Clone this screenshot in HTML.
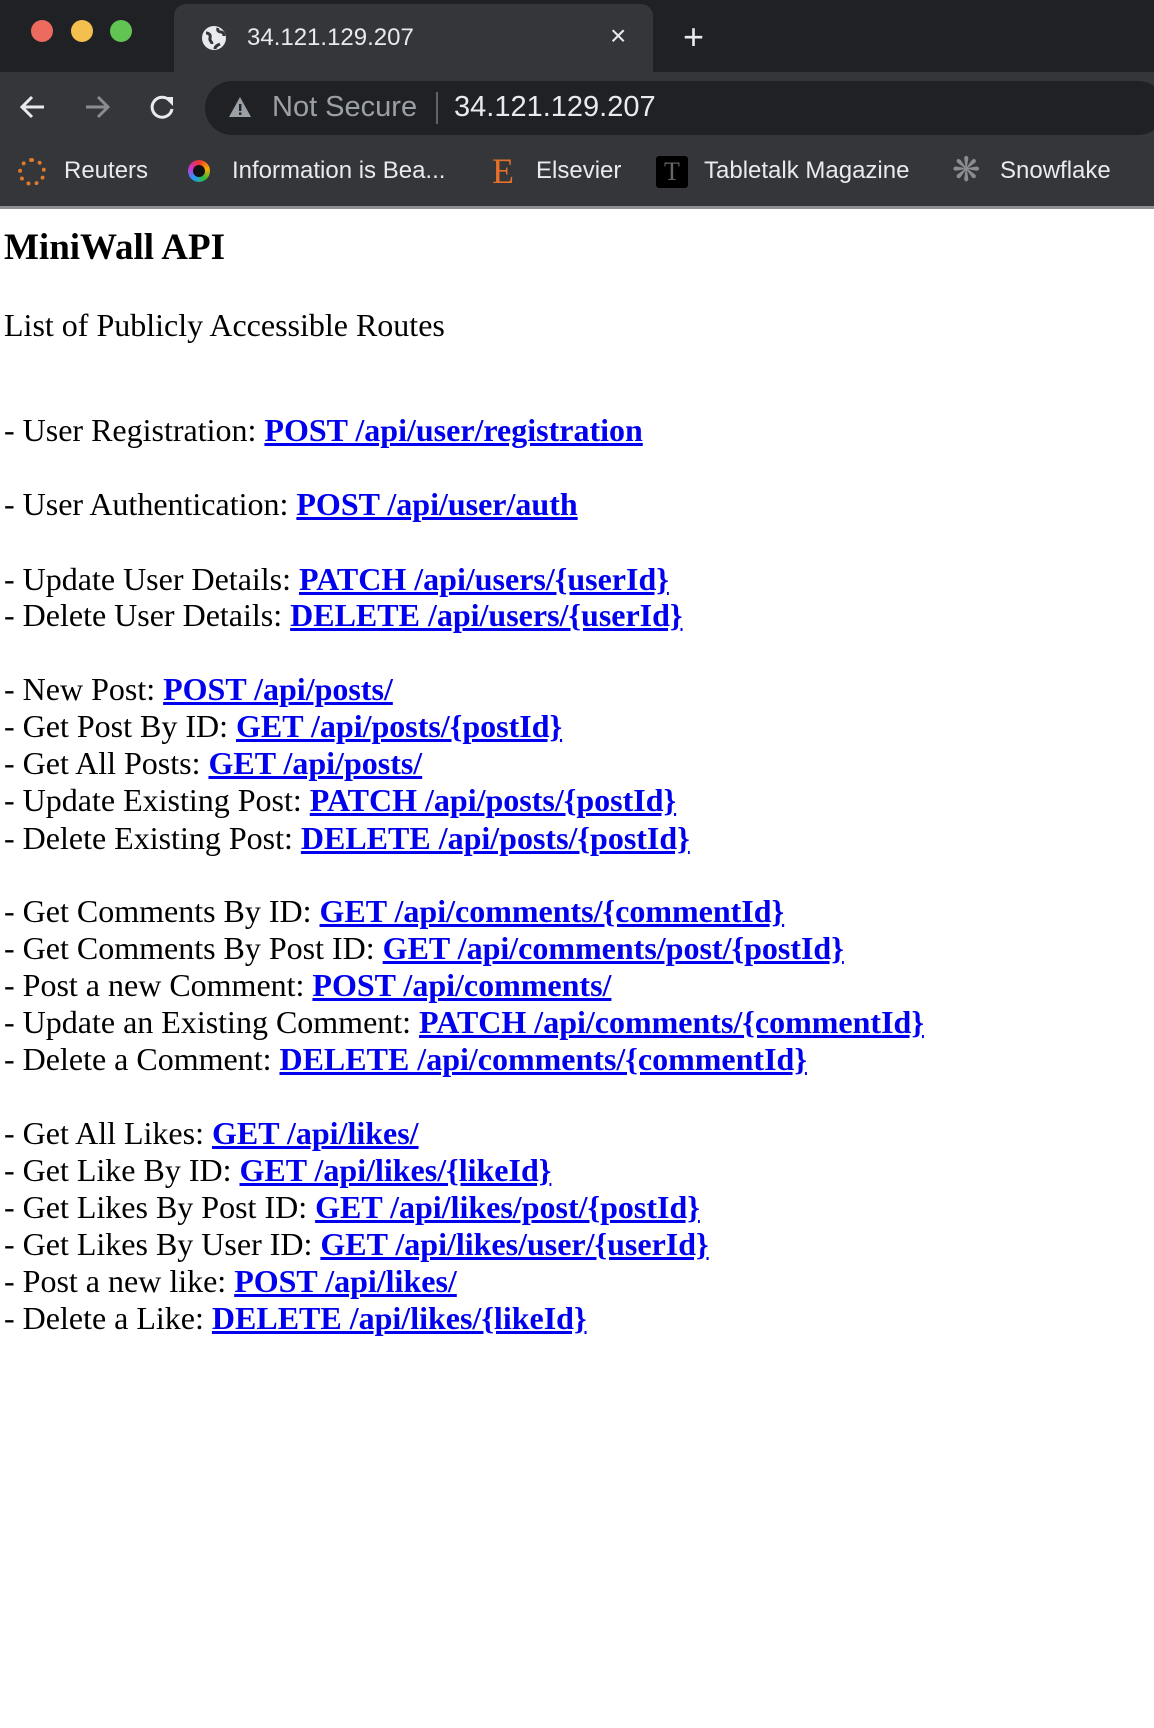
<!DOCTYPE html>
<html><head><meta charset="utf-8"><style>
*{margin:0;padding:0;box-sizing:border-box}
html,body{width:1154px;height:1728px;background:#fff;overflow:hidden;position:relative}
.ch{font-family:"Liberation Sans",sans-serif;color:#e8eaed;position:absolute}
.l{position:absolute;left:4px;font-family:"Liberation Serif",serif;font-size:32px;line-height:37px;white-space:nowrap;color:#000}
.l a{color:#0000ee;font-weight:bold;text-decoration:underline}
</style></head><body>
<div style="position:absolute;left:0;top:0;width:1154px;height:72px;background:#202124"></div>
<div style="position:absolute;left:31px;top:20px;width:22px;height:22px;border-radius:50%;background:#ec6a5e"></div>
<div style="position:absolute;left:71px;top:20px;width:22px;height:22px;border-radius:50%;background:#f4bf4f"></div>
<div style="position:absolute;left:110px;top:20px;width:22px;height:22px;border-radius:50%;background:#61c554"></div>
<div style="position:absolute;left:174px;top:4px;width:479px;height:70px;background:#35363a;border-radius:12px 12px 0 0"></div>
<svg style="position:absolute;left:201px;top:25px" width="26" height="26" viewBox="0 0 26 26"><circle cx="13" cy="13" r="12" fill="#e8eaed"/><path d="M5 8c3 0 5 2 4 5s2 3 2 6M17 3c-1 3 1 4 3 4s3 2 3 4M14 24c0-3 3-4 5-5" stroke="#35363a" stroke-width="3" fill="none"/></svg>
<div class="ch" style="left:247px;top:24px;font-size:24px">34.121.129.207</div>
<div class="ch" style="left:610px;top:20px;font-size:28px">×</div>
<div class="ch" style="left:683px;top:16px;font-size:36px">+</div>
<div style="position:absolute;left:0;top:72px;width:1154px;height:137px;background:#35363a"></div>
<svg style="position:absolute;left:18px;top:93px" width="190" height="28" viewBox="0 0 190 28"><path d="M26 14H4M14 4L4 14l10 10" stroke="#e8eaed" stroke-width="3" fill="none"/><path d="M68 14h22M80 4l10 10-10 10" stroke="#8a8c90" stroke-width="3" fill="none"/><path d="M152 8a10 10 0 1 0 2 8" stroke="#e8eaed" stroke-width="3" fill="none"/><path d="M146 4h9v9z" fill="#e8eaed"/></svg>
<div style="position:absolute;left:205px;top:81px;width:960px;height:54px;background:#202124;border-radius:27px"></div>
<svg style="position:absolute;left:228px;top:96px" width="24" height="22" viewBox="0 0 24 22"><path d="M12 1L23 21H1z" fill="#9aa0a6"/><rect x="11" y="8" width="2.4" height="7" fill="#202124"/><rect x="11" y="16.5" width="2.4" height="2.4" fill="#202124"/></svg>
<div class="ch" style="left:272px;top:91px;font-size:29px;color:#9aa0a6">Not Secure</div>
<div style="position:absolute;left:436px;top:92px;width:2px;height:32px;background:#5f6368"></div>
<div class="ch" style="left:454px;top:91px;font-size:29px">34.121.129.207</div>
<div style="position:absolute;left:18px;top:158px;width:28px;height:28px;border-radius:50%;border:4px dotted #e07a2a"></div>
<div class="ch" style="left:64px;top:157px;font-size:24px">Reuters</div>
<div style="position:absolute;left:188px;top:160px;width:22px;height:22px;border-radius:50%;background:conic-gradient(#e33,#fa0,#3b3,#29f,#c3c,#e33)"></div>
<div style="position:absolute;left:193px;top:165px;width:12px;height:12px;border-radius:50%;background:#111"></div>
<div class="ch" style="left:232px;top:157px;font-size:24px">Information is Bea...</div>
<div class="ch" style="left:492px;top:150px;font-size:36px;color:#e4702a;font-family:'Liberation Serif',serif">E</div>
<div class="ch" style="left:536px;top:157px;font-size:24px">Elsevier</div>
<div style="position:absolute;left:656px;top:156px;width:32px;height:32px;background:#000;border-radius:3px;color:#666;font:26px 'Liberation Serif',serif;text-align:center;line-height:32px">T</div>
<div class="ch" style="left:704px;top:157px;font-size:24px">Tabletalk Magazine</div>
<div class="ch" style="left:952px;top:150px;font-size:34px;color:#8a8c90">❋</div>
<div class="ch" style="left:1000px;top:157px;font-size:24px">Snowflake</div>
<div style="position:absolute;left:0;top:206px;width:1154px;height:3px;background:#8d8f93"></div>

<div class="l" style="top:229px;font-size:37px;font-weight:bold">MiniWall API</div>
<div class="l" style="top:307px">List of Publicly Accessible Routes</div>
<div class="l" style="top:412px">- User Registration: <a>POST /api/user/registration</a></div>
<div class="l" style="top:486px">- User Authentication: <a>POST /api/user/auth</a></div>
<div class="l" style="top:561px">- Update User Details: <a>PATCH /api/users/{userId}</a></div>
<div class="l" style="top:597px">- Delete User Details: <a>DELETE /api/users/{userId}</a></div>
<div class="l" style="top:671px">- New Post: <a>POST /api/posts/</a></div>
<div class="l" style="top:708px">- Get Post By ID: <a>GET /api/posts/{postId}</a></div>
<div class="l" style="top:745px">- Get All Posts: <a>GET /api/posts/</a></div>
<div class="l" style="top:782px">- Update Existing Post: <a>PATCH /api/posts/{postId}</a></div>
<div class="l" style="top:820px">- Delete Existing Post: <a>DELETE /api/posts/{postId}</a></div>
<div class="l" style="top:893px">- Get Comments By ID: <a>GET /api/comments/{commentId}</a></div>
<div class="l" style="top:930px">- Get Comments By Post ID: <a>GET /api/comments/post/{postId}</a></div>
<div class="l" style="top:967px">- Post a new Comment: <a>POST /api/comments/</a></div>
<div class="l" style="top:1004px">- Update an Existing Comment: <a>PATCH /api/comments/{commentId}</a></div>
<div class="l" style="top:1041px">- Delete a Comment: <a>DELETE /api/comments/{commentId}</a></div>
<div class="l" style="top:1115px">- Get All Likes: <a>GET /api/likes/</a></div>
<div class="l" style="top:1152px">- Get Like By ID: <a>GET /api/likes/{likeId}</a></div>
<div class="l" style="top:1189px">- Get Likes By Post ID: <a>GET /api/likes/post/{postId}</a></div>
<div class="l" style="top:1226px">- Get Likes By User ID: <a>GET /api/likes/user/{userId}</a></div>
<div class="l" style="top:1263px">- Post a new like: <a>POST /api/likes/</a></div>
<div class="l" style="top:1300px">- Delete a Like: <a>DELETE /api/likes/{likeId}</a></div>
</body></html>
